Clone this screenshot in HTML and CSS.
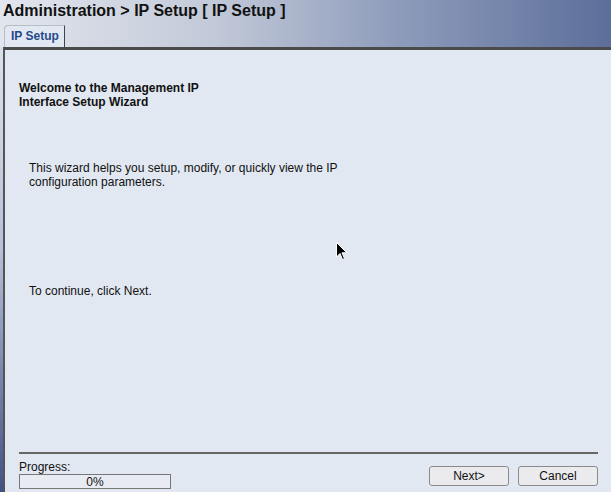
FILE: index.html
```html
<!DOCTYPE html>
<html>
<head>
<meta charset="utf-8">
<link rel="stylesheet" href="styles.css">
</head>
<body>
<div class="page">
  <header class="header">
    <h1 class="title">Administration &gt; IP Setup [ IP Setup ]</h1>
    <div class="tabs"><div class="tab">IP Setup</div></div>
  </header>
  <main class="panel">
    <h2 class="welcome">Welcome to the Management IP<br>Interface Setup Wizard</h2>
    <p class="intro">This wizard helps you setup, modify, or quickly view the IP<br>configuration parameters.</p>
    <p class="cont">To continue, click Next.</p>
    <div class="spacer"></div>
    <div class="footer">
      <div class="progress">
        <div class="plabel">Progress:</div>
        <div class="pbar">0%</div>
      </div>
      <div class="buttons">
        <button class="btn">Next&gt;</button>
        <button class="btn">Cancel</button>
      </div>
    </div>
  </main>
  <svg class="cursor" width="12" height="19" viewBox="0 0 12 19"><path d="M0.5 0.5 L0.5 15 L4 11.5 L6.5 17.5 L8.5 16.5 L6 10.8 L10.8 10.8 Z" fill="#000" stroke="#fff" stroke-width="1"/></svg>
</div>
</body>
</html>
```

FILE: styles.css
```css
html, body {
  margin: 0;
  padding: 0;
}
body {
  width: 611px;
  height: 492px;
  overflow: hidden;
  font-family: "Liberation Sans", Arial, sans-serif;
  background: linear-gradient(to bottom, #e2e7f0 0%, #b8c2d8 50%, #3f5189 100%);
}
.page {
  position: relative;
  width: 611px;
  height: 492px;
  display: flex;
  flex-direction: column;
}
.header {
  background: linear-gradient(to right, #e2e6ee 0%, #c2c9d8 35%, #8e9cbb 65%, #5c6e9a 100%);
  height: 47px;
  display: flex;
  flex-direction: column;
}
.title {
  margin: 0;
  padding: 1px 0 0 3px;
  font-size: 16px;
  font-weight: bold;
  color: #111;
  line-height: 20px;
  height: 24px;
}
.tabs {
  padding-left: 4px;
  display: flex;
  align-items: flex-end;
  flex: 1;
}
.tab {
  height: 22px;
  padding-left: 6px;
  background: #e2e8f2;
  border-top: 1px solid #b8bcc4;
  border-left: 1px solid #b8bcc4;
  border-right: 1px solid #444;
  border-top-left-radius: 4px;
  font-size: 12px;
  font-weight: bold;
  color: #26488a;
  line-height: 21px;
  box-sizing: border-box;
  width: 61px;
}
.panel {
  flex: 1;
  margin-left: 3px;
  background: #e1e8f2;
  border-top: 3px solid #4b4b4b;
  border-left: 2px solid #555;
  display: flex;
  flex-direction: column;
  padding: 0 13px 0 14px;
  font-size: 12px;
  color: #111;
}
.welcome {
  margin: 31px 0 0 0;
  font-size: 12px;
  font-weight: bold;
  line-height: 14px;
}
.intro {
  margin: 52px 0 0 10px;
  line-height: 14px;
}
.cont {
  margin: 95px 0 0 10px;
  line-height: 14px;
}
.spacer {
  flex: 1;
}
.footer {
  border-top: 2px solid #666;
  display: flex;
  justify-content: space-between;
  align-items: flex-end;
  padding-bottom: 3px;
}
.plabel {
  margin-top: 6px;
  line-height: 14px;
}
.pbar {
  width: 152px;
  height: 15px;
  box-sizing: border-box;
  border: 1px solid #777;
  background: #e8ecf2;
  text-align: center;
  font-size: 12px;
  line-height: 14px;
}
.buttons {
  display: flex;
  gap: 9px;
  padding-bottom: 3px;
}
.btn {
  width: 80px;
  height: 20px;
  box-sizing: border-box;
  border: 1px solid #8a8a8a;
  border-radius: 3px;
  background: #ebebee;
  font-family: "Liberation Sans", Arial, sans-serif;
  font-size: 12px;
  color: #111;
  padding: 0;
}
.cursor {
  position: absolute;
  left: 336px;
  top: 242px;
}
```
